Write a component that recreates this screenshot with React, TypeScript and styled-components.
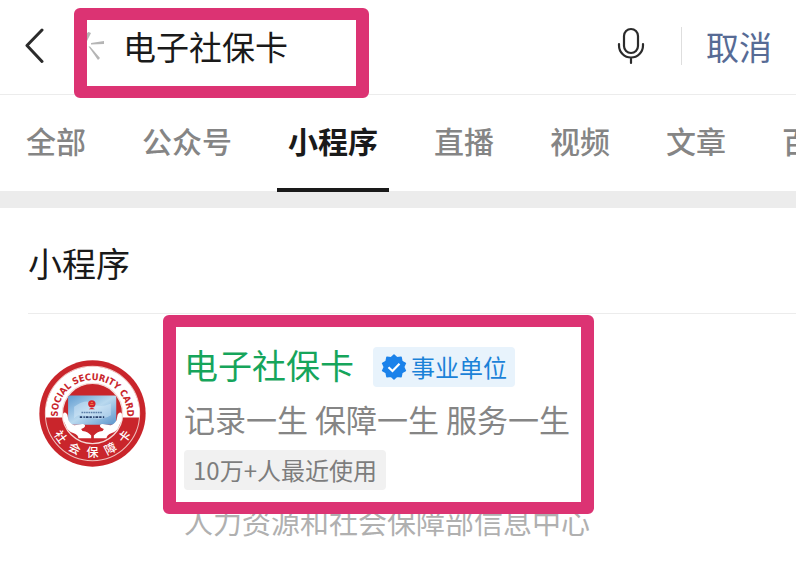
import React, { useState } from "react";
import styled, { createGlobalStyle, css } from "styled-components";

const GlobalStyle = createGlobalStyle`
  * { box-sizing: border-box; }
  body {
    margin: 0;
    background: #fff;
    color: #1a1a1a;
    font-family: "Noto Sans CJK SC", sans-serif;
    overflow-x: hidden;
  }
  button, input { font: inherit; color: inherit; }
  h1, h2, p { margin: 0; font-weight: 400; }
`;

const highlight = "#dc3373";

const Page = styled.div`
  margin-right: 12px;
  overflow-x: clip;
`;

const Header = styled.header`
  display: flex;
  align-items: center;
  height: 95px;
  padding: 0 24px 2px;
  border-bottom: 1px solid #ececec;
`;

const PlainButton = styled.button`
  display: flex;
  align-items: center;
  padding: 0;
  border: 0;
  background: none;
  cursor: pointer;
`;

const BackButton = styled(PlainButton)`
  width: 50px;
`;

const SearchField = styled.label`
  position: relative;
  display: flex;
  align-items: center;
  gap: 19px;
  width: 295px;
  height: 92px;
  padding: 0 13px;
  margin-right: auto;
`;

const SearchInput = styled.input`
  flex: 1;
  min-width: 0;
  height: 48px;
  padding: 0;
  border: 0;
  outline: 0;
  background: none;
  font-size: 33px;
  line-height: 48px;
`;

const HighlightFrame = styled.span<{ $inset: string }>`
  position: absolute;
  inset: ${(p) => p.$inset};
  border: 12px solid ${highlight};
  border-width: 12px 13px;
  border-radius: 6px;
  pointer-events: none;
`;

const Divider = styled.span`
  width: 1px;
  height: 38px;
  margin: 0 24px 0 36px;
  background: #dedede;
`;

const CancelButton = styled(PlainButton)`
  color: #576b95;
  font-size: 33px;
  line-height: 48px;
`;

const Tabs = styled.nav`
  display: flex;
  gap: 34px;
  height: 97px;
  margin-bottom: -1px;
  padding-left: 15px;
`;

const Tab = styled.button<{ $active: boolean }>`
  position: relative;
  flex: none;
  padding: 0 11px 3px;
  border: 0;
  border-bottom: 4px solid transparent;
  background: none;
  color: #858585;
  font-size: 30px;
  font-weight: 500;
  line-height: 88px;
  cursor: pointer;
  ${(p) =>
    p.$active &&
    css`
      border-color: #1a1a1a;
      color: #1a1a1a;
      font-weight: 700;
    `}
`;

const Band = styled.div`
  height: 17px;
  background: #ececec;
`;

const Section = styled.section`
  padding-left: 28px;
`;

const SectionTitle = styled.h1`
  padding: 30px 0 25px;
  border-bottom: 1px solid #ececec;
  font-size: 34px;
  line-height: 50px;
`;

const Result = styled.article`
  display: flex;
  gap: 38px;
  padding: 26px 0 20px 11px;
`;

const Logo = styled.svg`
  flex: none;
  width: 107px;
  height: 107px;
  margin-top: 20px;
`;

const Details = styled.div`
  position: relative;
  display: flex;
  flex-direction: column;
  align-items: flex-start;
`;

const TitleRow = styled.div`
  display: flex;
  align-items: center;
  gap: 19px;
`;

const ResultTitle = styled.h2`
  font-size: 34px;
  line-height: 50px;
`;

const ResultLink = styled.a`
  color: #16a55b;
  text-decoration: none;
`;

const Tag = styled.span<{ $official?: boolean }>`
  display: flex;
  align-items: center;
  gap: 4px;
  height: 40px;
  padding: 0 9px;
  border-radius: 4px;
  background: #f1f1f1;
  color: #7d7d7d;
  font-size: 24px;
  line-height: 40px;
  ${(p) =>
    p.$official &&
    css`
      margin-top: 4px;
      padding: 0 8px;
      background: #e8f3fc;
      color: #1b82d8;
    `}
`;

const Description = styled.p`
  margin: 6px 0 8px;
  color: #858585;
  font-size: 31px;
  line-height: 46px;
`;

const Publisher = styled.p`
  margin-top: 10px;
  color: #b0b0b0;
  font-size: 29px;
  line-height: 42px;
`;

const BackIcon = () => (
  <svg width="20" height="36" viewBox="0 0 20 36" fill="none" stroke="#2b2b2b" strokeWidth="3" strokeLinecap="round" strokeLinejoin="round" aria-hidden="true">
    <path d="M18 2 3 17.500 18 33.500" />
  </svg>
);

const SparkIcon = () => (
  <svg width="17" height="32" viewBox="0 0 17 32" fill="#b5b5b5" aria-hidden="true">
    <path d="M0 3 1.500 2 4 3 0 11Z" />
    <path d="M4 13 17 11v3L4 14.500Z" />
    <path d="M1.500 16.500 3 16.500 13 28 11 30Z" />
  </svg>
);

const MicIcon = () => (
  <svg width="28" height="38" viewBox="0 0 28 38" fill="none" stroke="#2b2b2b" strokeWidth="2.200" strokeLinecap="round" aria-hidden="true">
    <rect x="7" y="2" width="14" height="24" rx="7" />
    <path d="M2 17v1.500a12 12 0 0 0 24 0V17M14 30.500V36" />
  </svg>
);

const VerifiedIcon = () => (
  <svg width="26" height="26" viewBox="0 0 26 26" aria-hidden="true">
    <path
      fill="#1b82ea"
      stroke="#1b82ea"
      strokeWidth="1.500"
      strokeLinejoin="round"
      d="M13 1 16 3.800 20.100 3.300 20.900 7.300 24.400 9.300 22.700 13 24.400 16.700 20.900 18.700 20.100 22.700 16 22.200 13 25 10 22.200 5.900 22.700 5.100 18.700 1.600 16.700 3.300 13 1.600 9.300 5.100 7.300 5.900 3.300 10 3.800Z"
    />
    <path d="M7.500 13.200 11.500 17 18.500 9.800" fill="none" stroke="#fff" strokeWidth="2.200" />
  </svg>
);

const sealCharacters = [
  { char: "社", angle: 54 },
  { char: "会", angle: 27 },
  { char: "保", angle: 0 },
  { char: "障", angle: -27 },
  { char: "卡", angle: -54 },
];

const SealLogo = () => (
  <Logo viewBox="-160 -160 320 320" role="img" aria-label="社会保障卡">
    <defs>
      <path id="seal-arc" d="M-104 4A104 104 0 1 1 104 4" />
      <linearGradient id="seal-card" x1="0" y1="0" x2="1" y2="1">
        <stop offset="0" stopColor="#5f9bd0" />
        <stop offset="0.500" stopColor="#b9d9ef" />
        <stop offset="1" stopColor="#5b93cb" />
      </linearGradient>
    </defs>
    <circle r="159" fill="#c9252b" />
    <circle r="141" fill="none" stroke="#f0c0bd" strokeWidth="3" />
    <path d="M-140 12A140.500 140.500 0 1 1 140 12Z" fill="#fff" />
    <circle r="90" fill="#c9252b" stroke="#f6d9d6" strokeWidth="4" />
    <text fill="#c9252b" fontFamily='"DejaVu Sans Condensed", sans-serif' fontSize="28" fontWeight="700">
      <textPath href="#seal-arc" startOffset="50%" textAnchor="middle">
        SOCIAL SECURITY CARD
      </textPath>
    </text>
    {sealCharacters.map(({ char, angle }) => (
      <text key={char} transform={`rotate(${angle})`} y="131" fill="#fff" fontSize="36" fontWeight="500" textAnchor="middle">
        {char}
      </text>
    ))}
    <rect x="-73" y="-54" width="144" height="88" rx="5" fill="url(#seal-card)" />
    <path d="M-55-20Q-20-45 0-30T55-30V5Q20 25-10 10T-55 15Z" fill="#dceefa" opacity="0.450" />
    <circle cx="-2" cy="-29" r="11" fill="#d6232b" />
    <path d="M-11-13Q-2-22 7-13Z" fill="#d6232b" />
    <path d="M-5-33h6M-7-27h10" stroke="#f3b05a" strokeWidth="2" />
    <path d="M-33-3H28" stroke="#5b7fa8" strokeWidth="4" strokeDasharray="5 2" />
    <path d="M-38 11H38" stroke="#263f6b" strokeWidth="5" strokeDasharray="7 4 4 3 8 3" />
    <path
      id="seal-hand"
      fill="#fff"
      d="M-88 1Q-82-8-75 4L-72 20Q-64 34-54 35L-38 33Q-26 29-22 36Q-22 43-34 46L-30 52Q-12 54-4 66V74H-42Q-42 64-58 58Q-74 52-78 40L-88 18Z"
    />
    <use href="#seal-hand" transform="scale(-1 1)" />
  </Logo>
);

const tabs = ["全部", "公众号", "小程序", "直播", "视频", "文章", "百科"];

export default function App() {
  const [query, setQuery] = useState("电子社保卡");
  const [active, setActive] = useState("小程序");

  return (
    <>
      <GlobalStyle />
      <Page>
        <Header>
          <BackButton type="button" aria-label="返回">
            <BackIcon />
          </BackButton>
          <SearchField>
            <SparkIcon />
            <SearchInput aria-label="搜索" value={query} onChange={(e) => setQuery(e.target.value)} />
            <HighlightFrame $inset="8px 0 -6px" />
          </SearchField>
          <PlainButton type="button" aria-label="语音搜索">
            <MicIcon />
          </PlainButton>
          <Divider />
          <CancelButton type="button">取消</CancelButton>
        </Header>
        <Tabs>
          {tabs.map((tab) => (
            <Tab key={tab} type="button" $active={tab === active} onClick={() => setActive(tab)}>
              {tab}
            </Tab>
          ))}
        </Tabs>
        <Band />
        <Section>
          <SectionTitle>小程序</SectionTitle>
          <Result>
            <SealLogo />
            <Details>
              <TitleRow>
                <ResultTitle>
                  <ResultLink href="#result">电子社保卡</ResultLink>
                </ResultTitle>
                <Tag $official>
                  <VerifiedIcon />
                  事业单位
                </Tag>
              </TitleRow>
              <Description>记录一生 保障一生 服务一生</Description>
              <Tag>10万+人最近使用</Tag>
              <Publisher>人力资源和社会保障部信息中心</Publisher>
              <HighlightFrame $inset="-25px -4px 28px -21px" />
            </Details>
          </Result>
        </Section>
      </Page>
    </>
  );
}
